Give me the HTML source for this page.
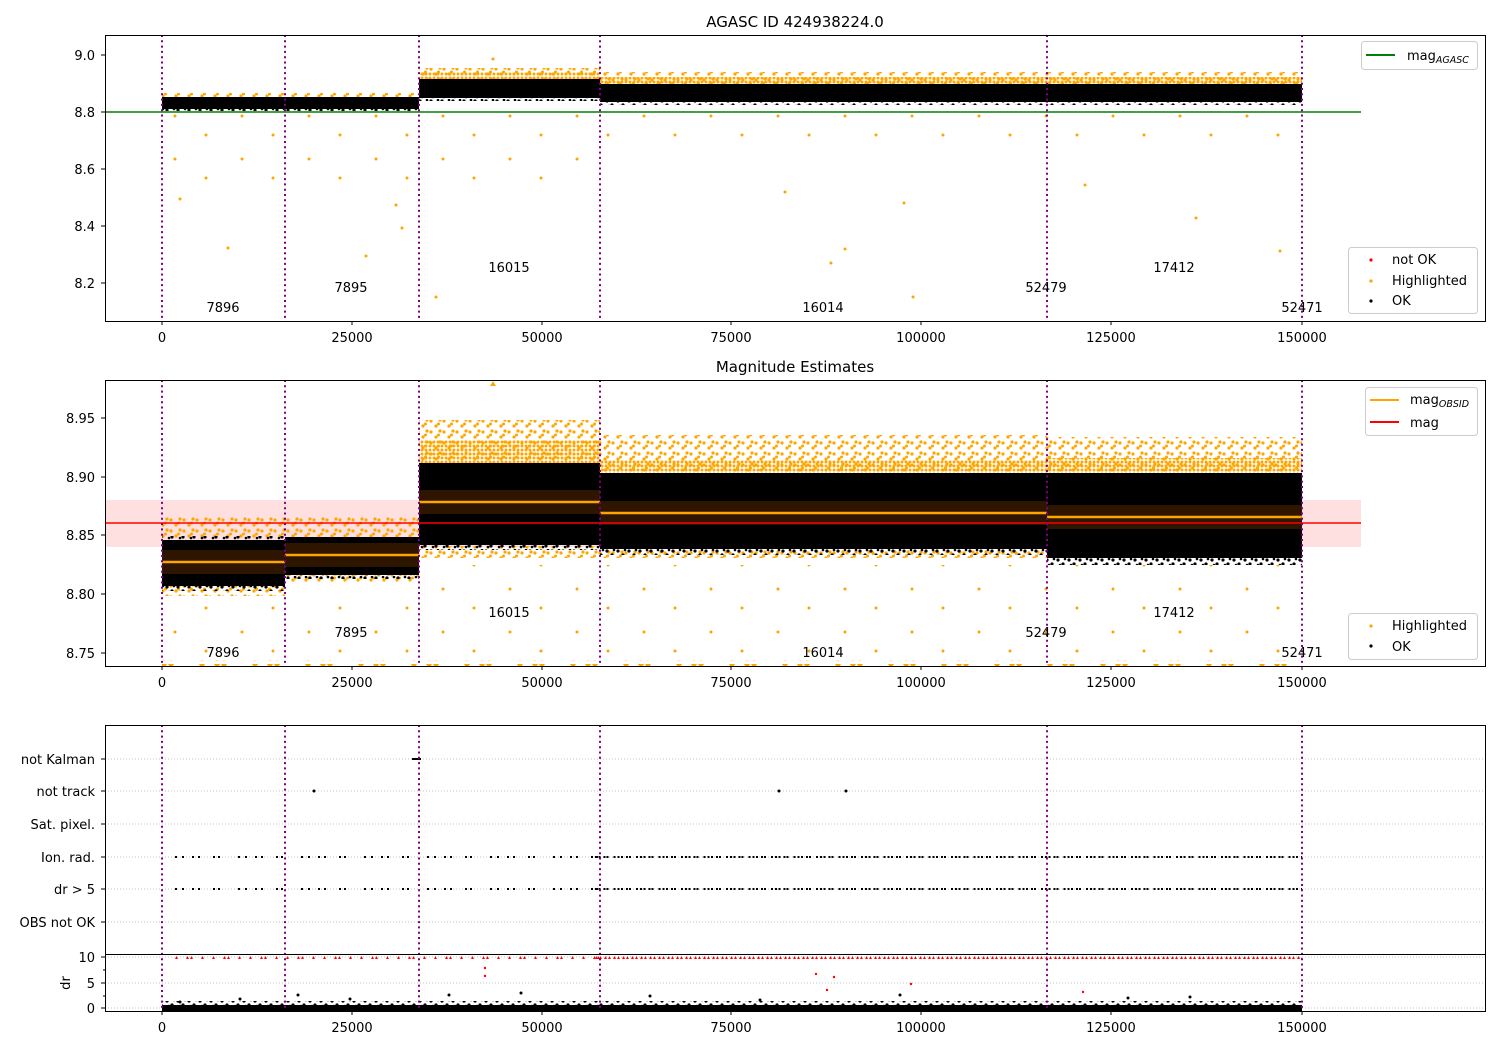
<!DOCTYPE html>
<html><head><meta charset="utf-8">
<style>
html,body{margin:0;padding:0;background:#fff;}
svg{display:block;font-family:"DejaVu Sans","Liberation Sans",sans-serif;}
</style></head>
<body>
<svg width="1500" height="1050" viewBox="0 0 1500 1050" xmlns="http://www.w3.org/2000/svg">
<defs>
  <pattern id="od" width="13" height="11" patternUnits="userSpaceOnUse">
    <circle cx="2" cy="3" r="1.6" fill="#ffa500"/><circle cx="7" cy="8" r="1.6" fill="#ffa500"/><circle cx="11" cy="2" r="1.6" fill="#ffa500"/><circle cx="9.5" cy="6" r="1.5" fill="#ffa500"/>
  </pattern>
  <pattern id="odd" width="4" height="4" patternUnits="userSpaceOnUse">
    <circle cx="2" cy="2" r="1.5" fill="#ffa500"/>
  </pattern>
  <pattern id="os" width="67" height="43" patternUnits="userSpaceOnUse">
    <circle cx="5" cy="6" r="1.5" fill="#ffa500"/><circle cx="41" cy="30" r="1.5" fill="#ffa500"/>
  </pattern>
  <pattern id="bd" width="11" height="9" patternUnits="userSpaceOnUse">
    <circle cx="2" cy="2" r="1.6" fill="#000"/><circle cx="7" cy="6" r="1.6" fill="#000"/><circle cx="9" cy="1" r="1.3" fill="#000"/><circle cx="4" cy="7" r="1.3" fill="#000"/>
  </pattern>
  <pattern id="tri" width="53" height="8" patternUnits="userSpaceOnUse">
    <path d="M2 0h6l-3 5zM9 0h6l-3 5zM40 0h6l-3 5z" fill="#ffa500"/>
  </pattern>
  <pattern id="rt" width="37" height="5" patternUnits="userSpaceOnUse">
    <path d="M1 4h3l-1.5-3zM5 4h3l-1.5-3zM16 4h3l-1.5-3zM27 4h3l-1.5-3z" fill="#f00"/>
  </pattern>
  <pattern id="rtd" width="9" height="5" patternUnits="userSpaceOnUse">
    <path d="M1 4h3l-1.5-3zM5 4h3l-1.5-3z" fill="#f00"/>
  </pattern>
</defs>
<rect width="1500" height="1050" fill="#fff"/>

<!-- ===== Panel 1 data ===== -->
<g>
  <rect x="162" y="112" width="438" height="80" fill="url(#os)"/>
  <rect x="600" y="108" width="702" height="40" fill="url(#os)"/>
  <rect x="162" y="93" width="257" height="6" fill="url(#od)"/>
  <rect x="419" y="68" width="181" height="12" fill="url(#od)"/>
  <rect x="419" y="72" width="181" height="8" fill="url(#odd)"/>
  <rect x="600" y="72" width="702" height="13" fill="url(#od)"/>
  <rect x="600" y="77" width="702" height="8" fill="url(#odd)"/>
  <rect x="162" y="97" width="257" height="12" fill="#000"/>
  <rect x="162" y="108" width="257" height="3" fill="url(#bd)"/>
  <rect x="419" y="79" width="181" height="19" fill="#000"/>
  <rect x="419" y="97" width="181" height="4" fill="url(#bd)"/>
  <rect x="600" y="84" width="702" height="18" fill="#000"/>
  <rect x="600" y="101" width="702" height="4" fill="url(#bd)"/>
  <g fill="#ffa500">
    <circle cx="228" cy="248" r="1.5"/><circle cx="366" cy="256" r="1.5"/><circle cx="436" cy="297" r="1.5"/><circle cx="493" cy="59" r="1.5"/><circle cx="904" cy="203" r="1.5"/><circle cx="913" cy="297" r="1.5"/><circle cx="1196" cy="218" r="1.5"/><circle cx="1280" cy="251" r="1.5"/><circle cx="180" cy="199" r="1.5"/><circle cx="1085" cy="185" r="1.5"/><circle cx="845" cy="249" r="1.5"/><circle cx="831" cy="263" r="1.5"/><circle cx="785" cy="192" r="1.5"/><circle cx="396" cy="205" r="1.5"/><circle cx="402" cy="228" r="1.5"/>
  </g>
  <path d="M105 112H1361" stroke="#008000" stroke-width="1.6"/>
</g>

<!-- ===== Panel 2 data ===== -->
<g>
  <rect x="105" y="500" width="1256" height="47" fill="#ffe0e0"/>
  <rect x="162" y="592" width="257" height="66" fill="url(#os)"/>
  <rect x="419" y="565" width="181" height="93" fill="url(#os)"/>
  <rect x="600" y="565" width="702" height="93" fill="url(#os)"/>
  <rect x="162" y="660" width="1140" height="6" fill="url(#tri)"/>
  <rect x="162" y="517" width="257" height="22" fill="url(#od)"/>
  <rect x="162" y="586" width="123" height="10" fill="url(#od)"/>
  <rect x="285" y="574" width="134" height="9" fill="url(#od)"/>
  <rect x="419" y="420" width="181" height="45" fill="url(#od)"/>
  <rect x="419" y="440" width="181" height="25" fill="url(#odd)"/>
  <rect x="600" y="435" width="447" height="43" fill="url(#od)"/>
  <rect x="600" y="460" width="447" height="18" fill="url(#odd)"/>
  <rect x="1047" y="437" width="255" height="41" fill="url(#od)"/>
  <rect x="1047" y="458" width="255" height="20" fill="url(#odd)"/>
  <rect x="419" y="546" width="883" height="12" fill="url(#od)"/>
  <rect x="162" y="540" width="123" height="46" fill="#000"/>
  <rect x="162" y="536" width="123" height="5" fill="url(#bd)"/>
  <rect x="162" y="585" width="123" height="6" fill="url(#bd)"/>
  <rect x="285" y="537" width="134" height="38" fill="#000"/>
  <rect x="285" y="574" width="134" height="5" fill="url(#bd)"/>
  <rect x="419" y="463" width="181" height="82" fill="#000"/>
  <rect x="419" y="544" width="181" height="6" fill="url(#bd)"/>
  <rect x="600" y="473" width="447" height="76" fill="#000"/>
  <rect x="600" y="548" width="447" height="7" fill="url(#bd)"/>
  <rect x="1047" y="473" width="255" height="85" fill="#000"/>
  <rect x="1047" y="557" width="255" height="8" fill="url(#bd)"/>
  <g fill="#5a2a00" opacity="0.5">
    <rect x="162" y="550" width="123" height="24"/>
    <rect x="285" y="543" width="134" height="24"/>
    <rect x="419" y="490" width="181" height="24"/>
    <rect x="600" y="501" width="447" height="24"/>
    <rect x="1047" y="505" width="255" height="24"/>
  </g>
  <path d="M162 562H285M285 555H419M419 502H600M600 513H1047M1047 517H1302" stroke="#ffa500" stroke-width="2.5"/>
  <path d="M490 386h6l-3-5z" fill="#ffa500"/>
  <path d="M105 523H1361" stroke="#f00" stroke-width="1.6"/>
</g>

<!-- ===== Panel 3 data ===== -->
<path d="M105 759H1485M105 791H1485M105 824H1485M105 857H1485M105 889H1485M105 922H1485M105 957H1485M105 983H1485M105 1008H1485" stroke="#b0b0b0" stroke-dasharray="1,2" stroke-width="0.8"/>
<g stroke="#000" stroke-width="2" fill="none">
  <path d="M175 857H600M175 889H600" stroke-dasharray="2,5,2,8,2,4,2,13,2,3,2,18"/>
  <path d="M595 857H1302M595 889H1302" stroke-dasharray="2,1.5,2,3,2,1,2,5,2,2"/>
  <path d="M412 759H421"/>
</g>
<g fill="#000"><circle cx="314" cy="791" r="1.5"/><circle cx="779" cy="791" r="1.5"/><circle cx="846" cy="791" r="1.5"/></g>
<rect x="170" y="955" width="430" height="5" fill="url(#rt)"/>
<rect x="595" y="955" width="707" height="5" fill="url(#rtd)"/>
<g fill="#f00"><circle cx="485" cy="968" r="1.2"/><circle cx="485" cy="976" r="1.2"/><circle cx="1083" cy="992" r="1.2"/><circle cx="911" cy="984" r="1.2"/><circle cx="816" cy="974" r="1.2"/><circle cx="834" cy="977" r="1.2"/><circle cx="827" cy="990" r="1.2"/></g>
<rect x="162" y="1005" width="1140" height="6" fill="#000"/>
<rect x="162" y="1001" width="1140" height="5" fill="url(#bd)"/>
<g fill="#000"><circle cx="180" cy="1002" r="1.5"/><circle cx="240" cy="999" r="1.5"/><circle cx="298" cy="995" r="1.5"/><circle cx="350" cy="999" r="1.5"/><circle cx="449" cy="995" r="1.5"/><circle cx="521" cy="993" r="1.5"/><circle cx="650" cy="996" r="1.5"/><circle cx="760" cy="1000" r="1.5"/><circle cx="900" cy="995" r="1.5"/><circle cx="1128" cy="998" r="1.5"/><circle cx="1190" cy="997" r="1.5"/></g>

<g stroke="#800080" stroke-width="2" stroke-dasharray="2,3.3">
  <path d="M162 35V321M285 35V321M419 35V321M600 35V321M1047 35V321M1302 35V321"/>
  <path d="M162 380V666M285 380V666M419 380V666M600 380V666M1047 380V666M1302 380V666"/>
  <path d="M162 725V1011M285 725V1011M419 725V1011M600 725V1011M1047 725V1011M1302 725V1011"/>
</g>

<g font-size="13" fill="#000">
  <text x="795" y="27" text-anchor="middle" font-size="15">AGASC ID 424938224.0</text>
  <text x="795" y="372" text-anchor="middle" font-size="15">Magnitude Estimates</text>
  <g fill="none" stroke="#000">
    <rect x="105.5" y="35.5" width="1380" height="286"/>
    <rect x="105.5" y="380.5" width="1380" height="286"/>
    <rect x="105.5" y="725.5" width="1380" height="286"/>
    <path d="M105 954.5H1485"/>
  </g>
  <g text-anchor="end">
    <text x="95" y="60">9.0</text><text x="95" y="117">8.8</text><text x="95" y="174">8.6</text><text x="95" y="231">8.4</text><text x="95" y="288">8.2</text>
    <text x="95" y="423">8.95</text><text x="95" y="482">8.90</text><text x="95" y="540">8.85</text><text x="95" y="599">8.80</text><text x="95" y="658">8.75</text>
    <text x="95" y="764">not Kalman</text><text x="95" y="796">not track</text><text x="95" y="829">Sat. pixel.</text><text x="95" y="862">Ion. rad.</text><text x="95" y="894">dr &gt; 5</text><text x="95" y="927">OBS not OK</text>
    <text x="95" y="962">10</text><text x="95" y="988">5</text><text x="95" y="1013">0</text>
  </g>
  <text x="70" y="983" text-anchor="middle" transform="rotate(-90 70 983)">dr</text>
  <g stroke="#000">
    <path d="M101 55H105M101 112H105M101 169H105M101 226H105M101 283H105M101 418H105M101 477H105M101 535H105M101 594H105M101 653H105M101 759H105M101 791H105M101 824H105M101 857H105M101 889H105M101 922H105M101 957H105M101 983H105M101 1008H105M103 970H105M103 996H105"/>
    <path d="M162 321V325M352 321V325M542 321V325M731 321V325M921 321V325M1111 321V325M1302 321V325"/>
    <path d="M162 666V670M352 666V670M542 666V670M731 666V670M921 666V670M1111 666V670M1302 666V670"/>
    <path d="M162 1011V1015M352 1011V1015M542 1011V1015M731 1011V1015M921 1011V1015M1111 1011V1015M1302 1011V1015"/>
  </g>
  <g text-anchor="middle">
    <text x="162" y="342">0</text><text x="352" y="342">25000</text><text x="542" y="342">50000</text><text x="731" y="342">75000</text><text x="921" y="342">100000</text><text x="1111" y="342">125000</text><text x="1302" y="342">150000</text>
    <text x="162" y="687">0</text><text x="352" y="687">25000</text><text x="542" y="687">50000</text><text x="731" y="687">75000</text><text x="921" y="687">100000</text><text x="1111" y="687">125000</text><text x="1302" y="687">150000</text>
    <text x="162" y="1032">0</text><text x="352" y="1032">25000</text><text x="542" y="1032">50000</text><text x="731" y="1032">75000</text><text x="921" y="1032">100000</text><text x="1111" y="1032">125000</text><text x="1302" y="1032">150000</text>
    <text x="223" y="312">7896</text><text x="351" y="292">7895</text><text x="509" y="272">16015</text><text x="823" y="312">16014</text><text x="1046" y="292">52479</text><text x="1174" y="272">17412</text><text x="1302" y="312">52471</text>
    <text x="223" y="657">7896</text><text x="351" y="637">7895</text><text x="509" y="617">16015</text><text x="823" y="657">16014</text><text x="1046" y="637">52479</text><text x="1174" y="617">17412</text><text x="1302" y="657">52471</text>
  </g>

  <rect x="1361.5" y="41.5" width="116" height="28" rx="3" fill="#fff" fill-opacity="0.8" stroke="#ccc"/>
  <line x1="1366" y1="55" x2="1395" y2="55" stroke="#008000" stroke-width="2"/>
  <text x="1407" y="60">mag<tspan font-size="9.5" font-style="italic" dy="3">AGASC</tspan></text>

  <rect x="1348.5" y="247.5" width="129" height="66" rx="3" fill="#fff" fill-opacity="0.8" stroke="#ccc"/>
  <circle cx="1371" cy="260" r="1.6" fill="#f00"/><text x="1392" y="264">not OK</text>
  <circle cx="1371" cy="281" r="1.6" fill="#ffa500"/><text x="1392" y="285">Highlighted</text>
  <circle cx="1371" cy="301" r="1.6" fill="#000"/><text x="1392" y="305">OK</text>

  <rect x="1365.5" y="387.5" width="112" height="48" rx="3" fill="#fff" fill-opacity="0.8" stroke="#ccc"/>
  <line x1="1370" y1="400" x2="1399" y2="400" stroke="#ffa500" stroke-width="2"/>
  <text x="1410" y="404">mag<tspan font-size="9.5" font-style="italic" dy="3">OBSID</tspan></text>
  <line x1="1370" y1="422" x2="1399" y2="422" stroke="#f00" stroke-width="2"/>
  <text x="1410" y="427">mag</text>

  <rect x="1348.5" y="613.5" width="129" height="46" rx="3" fill="#fff" fill-opacity="0.8" stroke="#ccc"/>
  <circle cx="1371" cy="626" r="1.6" fill="#ffa500"/><text x="1392" y="630">Highlighted</text>
  <circle cx="1371" cy="646" r="1.6" fill="#000"/><text x="1392" y="651">OK</text>
</g>
</svg>
</body></html>
